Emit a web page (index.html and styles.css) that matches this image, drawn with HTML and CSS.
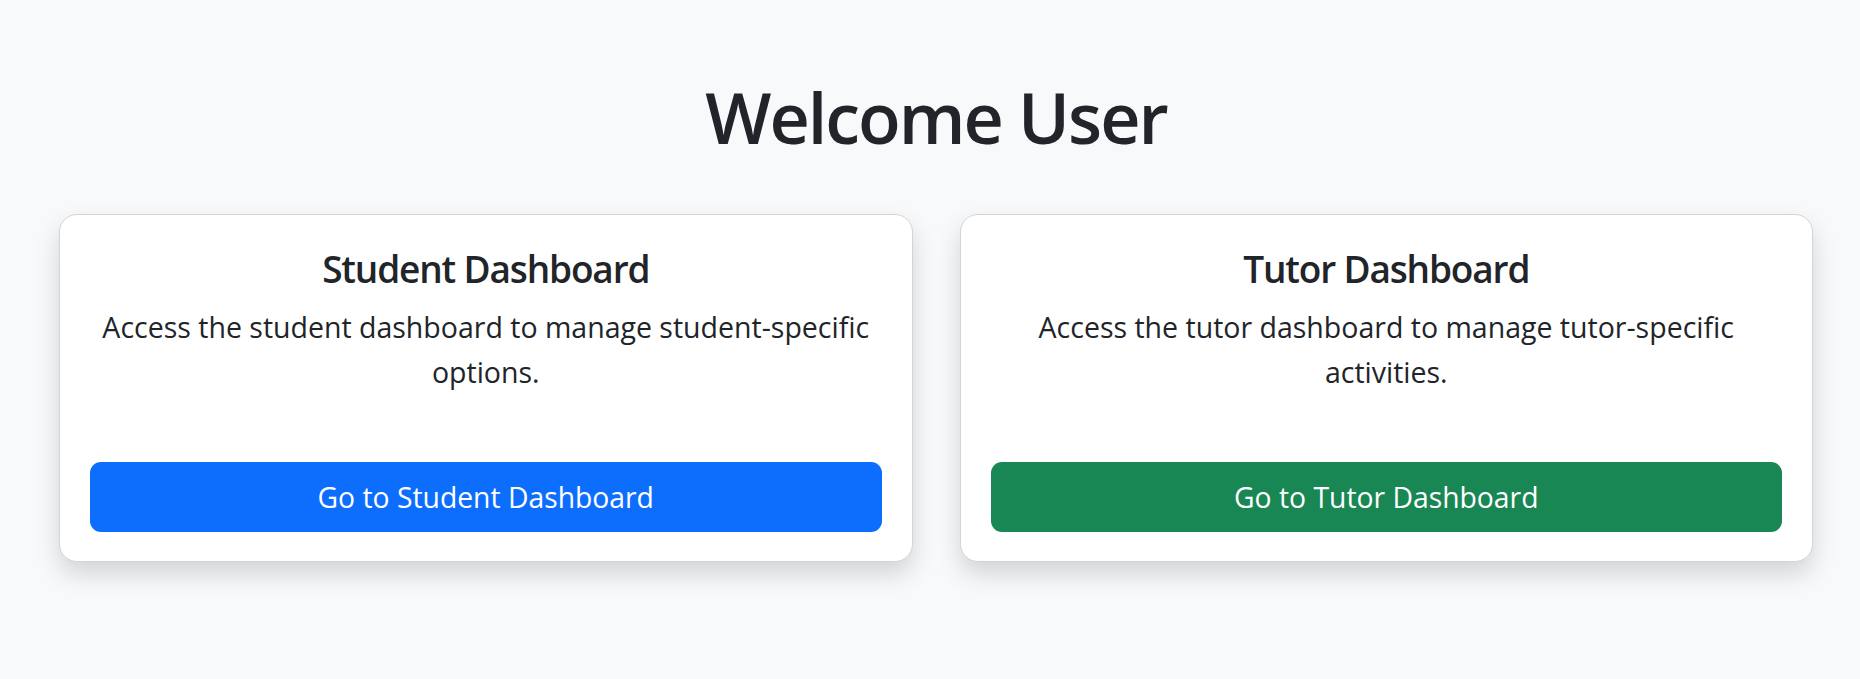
FILE: index.html
```html
<!DOCTYPE html>
<html lang="en">
<head>
<meta charset="utf-8">
<title>Welcome User</title>
<link rel="stylesheet" href="styles.css">
</head>
<body>
<main class="page">
  <h1 class="welcome">Welcome User</h1>
  <div class="cards">
    <section class="card">
      <h2 class="card-title">Student Dashboard</h2>
      <p class="card-text">Access the student dashboard to manage student-specific options.</p>
      <a class="btn btn-primary" href="#">Go to Student Dashboard</a>
    </section>
    <section class="card">
      <h2 class="card-title">Tutor Dashboard</h2>
      <p class="card-text">Access the tutor dashboard to manage tutor-specific activities.</p>
      <a class="btn btn-success" href="#">Go to Tutor Dashboard</a>
    </section>
  </div>
</main>
</body>
</html>
```

FILE: styles.css
```css
html, body {
  margin: 0;
  padding: 0;
}

body {
  background: #f8f9fa;
  color: #212529;
  font-family: "Open Sans", "Noto Sans", "Liberation Sans", sans-serif;
  min-height: 100vh;
}

.page {
  padding: 75px 47px 80px 59px;
}

.welcome {
  margin: 0 0 55px;
  text-align: center;
  font-size: 70px;
  line-height: 84px;
  font-weight: 600;
  letter-spacing: -2px;
}

.cards {
  display: grid;
  grid-template-columns: 1fr 1fr;
  gap: 47px;
}

.card {
  background: #fff;
  border: 1px solid #d4d4d4;
  border-radius: 18px;
  box-shadow: 0 12px 24px rgba(0, 0, 0, 0.15);
  padding: 31px 30px 29px;
  text-align: center;
  display: flex;
  flex-direction: column;
}

.card-title {
  margin: 0 0 14px;
  font-size: 37px;
  line-height: 45px;
  font-weight: 600;
  letter-spacing: -1.15px;
}

.card-text {
  margin: 0 0 67px;
  font-size: 28.5px;
  line-height: 45px;
  font-weight: 400;
}

.btn {
  display: flex;
  align-items: center;
  justify-content: center;
  height: 70px;
  border-radius: 11px;
  color: #fff;
  text-decoration: none;
  font-size: 28.3px;
  line-height: 1;
}

.btn-primary {
  background: #0d6efd;
}

.btn-success {
  background: #198754;
}
```
